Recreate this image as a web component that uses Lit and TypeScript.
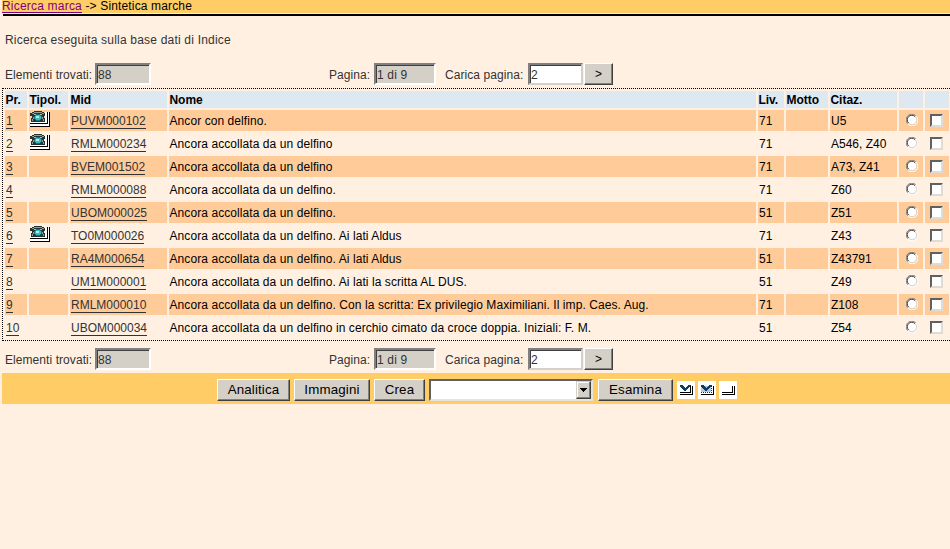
import { LitElement, html, css, svg } from "lit";
import { customElement } from "lit/decorators.js";

interface Mark {
  mid: string;
  name: string;
  level: number;
  cite: string;
  image?: boolean;
}

const MARKS: Mark[] = [
  { mid: "PUVM000102", name: "Ancor con delfino.", level: 71, cite: "U5", image: true },
  { mid: "RMLM000234", name: "Ancora accollata da un delfino", level: 71, cite: "A546, Z40", image: true },
  { mid: "BVEM001502", name: "Ancora accollata da un delfino", level: 71, cite: "A73, Z41" },
  { mid: "RMLM000088", name: "Ancora accollata da un delfino.", level: 71, cite: "Z60" },
  { mid: "UBOM000025", name: "Ancora accollata da un delfino.", level: 51, cite: "Z51" },
  { mid: "TO0M000026", name: "Ancora accollata da un delfino. Ai lati Aldus", level: 71, cite: "Z43", image: true },
  { mid: "RA4M000654", name: "Ancora accollata da un delfino. Ai lati Aldus", level: 51, cite: "Z43791" },
  { mid: "UM1M000001", name: "Ancora accollata da un delfino. Ai lati la scritta AL DUS.", level: 51, cite: "Z49" },
  { mid: "RMLM000010", name: "Ancora accollata da un delfino. Con la scritta: Ex privilegio Maximiliani. Il imp. Caes. Aug.", level: 71, cite: "Z108" },
  { mid: "UBOM000034", name: "Ancora accollata da un delfino in cerchio cimato da croce doppia. Iniziali: F. M.", level: 51, cite: "Z54" },
];

const phone = html`<svg class="phone" width="20" height="16" viewBox="0 0 20 16" shape-rendering="crispEdges">
  <path fill="#fff" d="M0 10h15V1h5v15H0z" />
  <path fill="#000" d="M0 12h17V1h1v12H0zM0 15h19V1h1v15H0z" />
  <path fill="#263434" d="M4 0h8v1h2v1h1v3h-1v2h1v4H1V7h1V5H0V2h2V1h2z" />
  <path fill="#8f9c98" d="M4 1h8v1H4zM2 2h2v1H2zM12 2h2v1h-2zM3 6h1v2H3zM12 6h1v2h-1zM2 8h1v2H2zM13 8h1v2h-1z" />
  <path fill="#c8b79c" d="M4 3h2v1H4zM10 3h2v1h-2z" />
  <path fill="#14707c" d="M6 3h4v1h1v1h1v3h-1v1h-1v1H6V9H5V8H4V5h1V4h1z" />
  <path fill="#3db8bd" d="M6 4h4v1h1v3h-1v1H6V8H5V5h1z" />
  <path fill="#a6f2ef" d="M6 5h3v2H6z" />
</svg>`;

const sheet = svg`<path fill="#000" d="M3 11h10V5h1v7H3zM3 13h12V5h1v9H3z" />`;
const tick = svg`<path fill="#0b3c6b" d="M3 4h3v1h1v1h1v1h1V6h1V5h1V4h3v1h-1v1h-1v1h-1v1h-1v1H9v1H7V9H6V8H5V7H4V6H3z" />`;

const checkAll = html`<svg width="18" height="18" viewBox="0 0 18 18" shape-rendering="crispEdges">
  <path fill="#fff" d="M0 0h18v18H0z" />${sheet}${tick}
</svg>`;
const checkSome = html`<svg width="18" height="18" viewBox="0 0 18 18" shape-rendering="crispEdges">
  <path fill="#fff" d="M0 0h18v18H0z" />
  <path fill="#b5c9df" d="M3 5h10v6H3z" />
  <path stroke="#1a2d48" stroke-dasharray="1 1" d="M3 11.5h11M13.5 5v7" />
  <path fill="#000" d="M3 13h12V5h1v9H3z" />${tick}
</svg>`;
const uncheck = html`<svg width="18" height="18" viewBox="0 0 18 18" shape-rendering="crispEdges">
  <path fill="#fff" d="M0 0h18v18H0z" />${sheet}
</svg>`;

const radio = html`<svg class="radio" width="12" height="12" viewBox="0 0 12 12">
  <circle cx="6" cy="6" r="5" fill="#fff" />
  <path fill="none" stroke="#808080" d="M1.8 9.7A5.4 5.4 0 0 1 9.7 1.8" />
  <path fill="none" stroke="#404040" d="M2.6 9A4.5 4.5 0 0 1 9 2.6" />
  <path fill="none" stroke="#fff" d="M10.2 2.3A5.4 5.4 0 0 1 2.3 10.2" />
  <path fill="none" stroke="#d4d0c8" d="M9.4 3A4.5 4.5 0 0 1 3 9.4" />
</svg>`;

@customElement("app-root")
export class AppRoot extends LitElement {
  static styles = css`
    :host {
      display: block;
      height: 549px;
      overflow: hidden;
      background: #fff0e1;
      font: 12px/14px "Liberation Sans", Arial, sans-serif;
      color: #333;
    }
    * { box-sizing: border-box; }
    .crumbs {
      height: 13px;
      margin-left: 2px;
      background: #fc6;
      color: #000;
      line-height: 12px;
      letter-spacing: 0.15px;
      white-space: pre;
    }
    .crumbs a { color: #800080; letter-spacing: 0.2px; text-decoration: underline; text-underline-offset: 2px; }
    .rule { height: 2px; margin: 1px 0 0 3px; background: #000; }
    .source { margin: 17px 0 0 5px; height: 14px; letter-spacing: 0.2px; }
    .pager { display: flex; align-items: center; height: 22px; padding-left: 5px; }
    .pager.top { margin-top: 16px; }
    .pager.bottom { margin-top: 7px; }
    .pager span { padding-top: 1px; white-space: nowrap; letter-spacing: 0.07px; }
    .l1 { width: 90px; }
    .l2 { width: 45px; margin-left: 178px; }
    .l3 { width: 83px; margin-left: 9px; }
    .field {
      height: 22px;
      padding: 2px 1px;
      border: 2px solid;
      border-color: #808080 #fff #fff #808080;
      box-shadow: inset 1px 1px #404040;
      background: #d4d0c8;
      line-height: 17px;
      letter-spacing: 0.15px;
    }
    .field.w1 { width: 56px; }
    .field.w2 { width: 62px; }
    .field.edit { width: 55px; background: #fff; border-color: #808080 #d4d0c8 #d4d0c8 #808080; }
    button {
      height: 22px;
      padding: 0;
      border: 1px solid;
      border-color: #fff #404040 #404040 #fff;
      border-radius: 0;
      box-shadow: inset -1px -1px #808080;
      background: #d4d0c8;
      color: #000;
      font: 13.33px/19px "Liberation Sans", Arial, sans-serif;
      letter-spacing: 0.15px;
    }
    .go { width: 29px; margin-left: 1px; font-size: 12px; }
    .grid {
      margin: 3px 0 0 2px;
      padding: 2px 1px 1px 2px;
      border: 1px dotted #000;
      border-right: 0;
      height: 253px;
      display: grid;
      grid-template-rows: 17px;
      grid-auto-rows: 21px;
      gap: 2px;
      color: #000;
    }
    .row {
      display: grid;
      grid-template-columns: 22px 39px 97px 587px 26px 42px 67px 24px 24px;
      column-gap: 2px;
    }
    .row > div { padding: 4px 1px 0; white-space: nowrap; }
    .row > .name { padding-left: 0.5px; letter-spacing: 0.075px; }
    .row.head > div { background: #dee8f1; padding: 2px 0 0 0.4px; font-weight: bold; }
    .odd > div { background: #fc9; }
    .row a {
      display: inline-block;
      height: 15px;
      border-bottom: 1px solid #333;
      color: #333;
    }
    .row > .pic { padding: 1px; }
    .phone, .radio { display: block; }
    .row > .pick { padding: 4px 6px 0 7px; }
    .box {
      width: 13px;
      height: 13px;
      border: 2px solid;
      border-color: #606060 #e0dcd4 #e0dcd4 #606060;
      background: #fff;
    }
    .row > .tick { padding: 4px 5px; }
    .bar {
      display: flex;
      align-items: center;
      height: 31px;
      margin: 3px 0 0 2px;
      padding: 2px 0 0 215px;
      background: #fc6;
    }
    .b1 { width: 73px; }
    .b2 { width: 76px; margin-left: 4px; }
    .b3 { width: 51px; margin-left: 4px; }
    .b4 { width: 75px; margin-left: 5px; }
    .combo {
      display: flex;
      justify-content: flex-end;
      width: 164px;
      height: 22px;
      margin-left: 4px;
      border: 2px solid;
      border-color: #606060 #e8e4dc #e8e4dc #606060;
      background: #fff;
    }
    .arrow {
      display: grid;
      place-items: center;
      width: 15px;
      height: 18px;
      border: 1px solid;
      border-color: #d4d0c8 #404040 #404040 #d4d0c8;
      box-shadow: inset -1px -1px #808080, inset 1px 1px #fff;
      background: #d4d0c8;
    }
    .bar > svg { margin-right: 3px; }
    .b4 + svg { margin-left: 4px; }
  `;

  private pager(place: string) {
    return html`<div class="pager ${place}">
      <span class="l1">Elementi trovati:</span><div class="field w1">88</div>
      <span class="l2">Pagina:</span><div class="field w2">1 di 9</div>
      <span class="l3">Carica pagina:</span><div class="field edit">2</div>
      <button class="go">&gt;</button>
    </div>`;
  }

  render() {
    return html`
      <div class="crumbs"><a>Ricerca marca</a> -&gt; Sintetica marche</div>
      <div class="rule"></div>
      <div class="source">Ricerca eseguita sulla base dati di Indice</div>
      ${this.pager("top")}
      <div class="grid">
        <div class="row head">
          ${["Pr.", "Tipol.", "Mid", "Nome", "Liv.", "Motto", "Citaz.", "", ""].map((t) => html`<div>${t}</div>`)}
        </div>
        ${MARKS.map(
          (m, i) => html`<div class="row ${i % 2 ? "" : "odd"}">
            <div><a>${i + 1}</a></div>
            <div class="pic">${m.image ? phone : ""}</div>
            <div><a>${m.mid}</a></div>
            <div class="name">${m.name}</div>
            <div>${m.level}</div>
            <div></div>
            <div>${m.cite}</div>
            <div class="pick">${radio}</div>
            <div class="tick"><div class="box"></div></div>
          </div>`
        )}
      </div>
      ${this.pager("bottom")}
      <div class="bar">
        <button class="b1">Analitica</button>
        <button class="b2">Immagini</button>
        <button class="b3">Crea</button>
        <div class="combo"><div class="arrow">
          <svg width="7" height="4" viewBox="0 0 7 4" shape-rendering="crispEdges"><path d="M0 0h7v1H6v1H5v1H4v1H3V3H2V2H1V1H0z" /></svg>
        </div></div>
        <button class="b4">Esamina</button>
        ${checkAll}${checkSome}${uncheck}
      </div>
    `;
  }
}
